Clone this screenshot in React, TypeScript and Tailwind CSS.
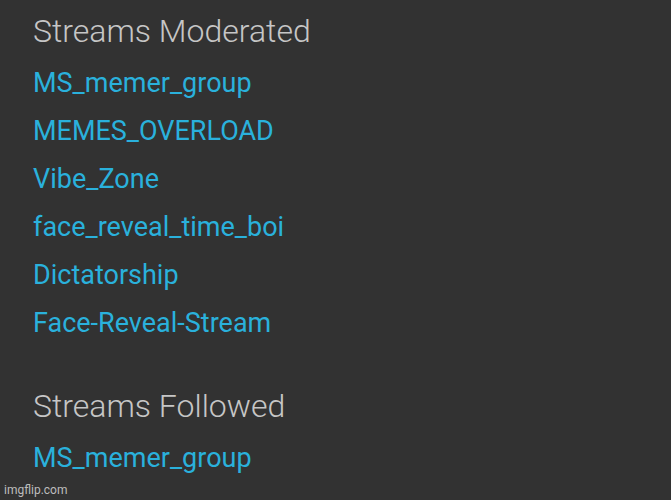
export default function App() {
  const moderated = [
    'MS_memer_group',
    'MEMES_OVERLOAD',
    'Vibe_Zone',
    'face_reveal_time_boi',
    'Dictatorship',
    'Face-Reveal-Stream',
  ];
  const followed = ['MS_memer_group'];

  return (
    <div
      className="relative h-[500px] w-[671px] overflow-hidden bg-[#323232] pl-[33px]"
      style={{ fontFamily: 'Roboto, "Noto Sans", sans-serif' }}
    >
      <h2 className="pt-[11px] text-[32px] leading-[40px] font-light text-[#c6c6c6]">Streams Moderated</h2>
      <ul className="mt-[8px] flex flex-col">
        {moderated.map((name) => (
          <li key={name} className="text-[27px] leading-[48px] text-[#2ab1dc]">
            {name}
          </li>
        ))}
      </ul>
      <h2 className="mt-[39px] text-[32px] leading-[40px] font-light text-[#c6c6c6]">Streams Followed</h2>
      <ul className="mt-[8px] flex flex-col">
        {followed.map((name) => (
          <li key={name} className="text-[27px] leading-[48px] text-[#2ab1dc]">
            {name}
          </li>
        ))}
      </ul>
      <div className="absolute bottom-[3px] left-[4px] text-[12px] leading-[14px] text-[#bdbdbd]">imgflip.com</div>
    </div>
  );
}
